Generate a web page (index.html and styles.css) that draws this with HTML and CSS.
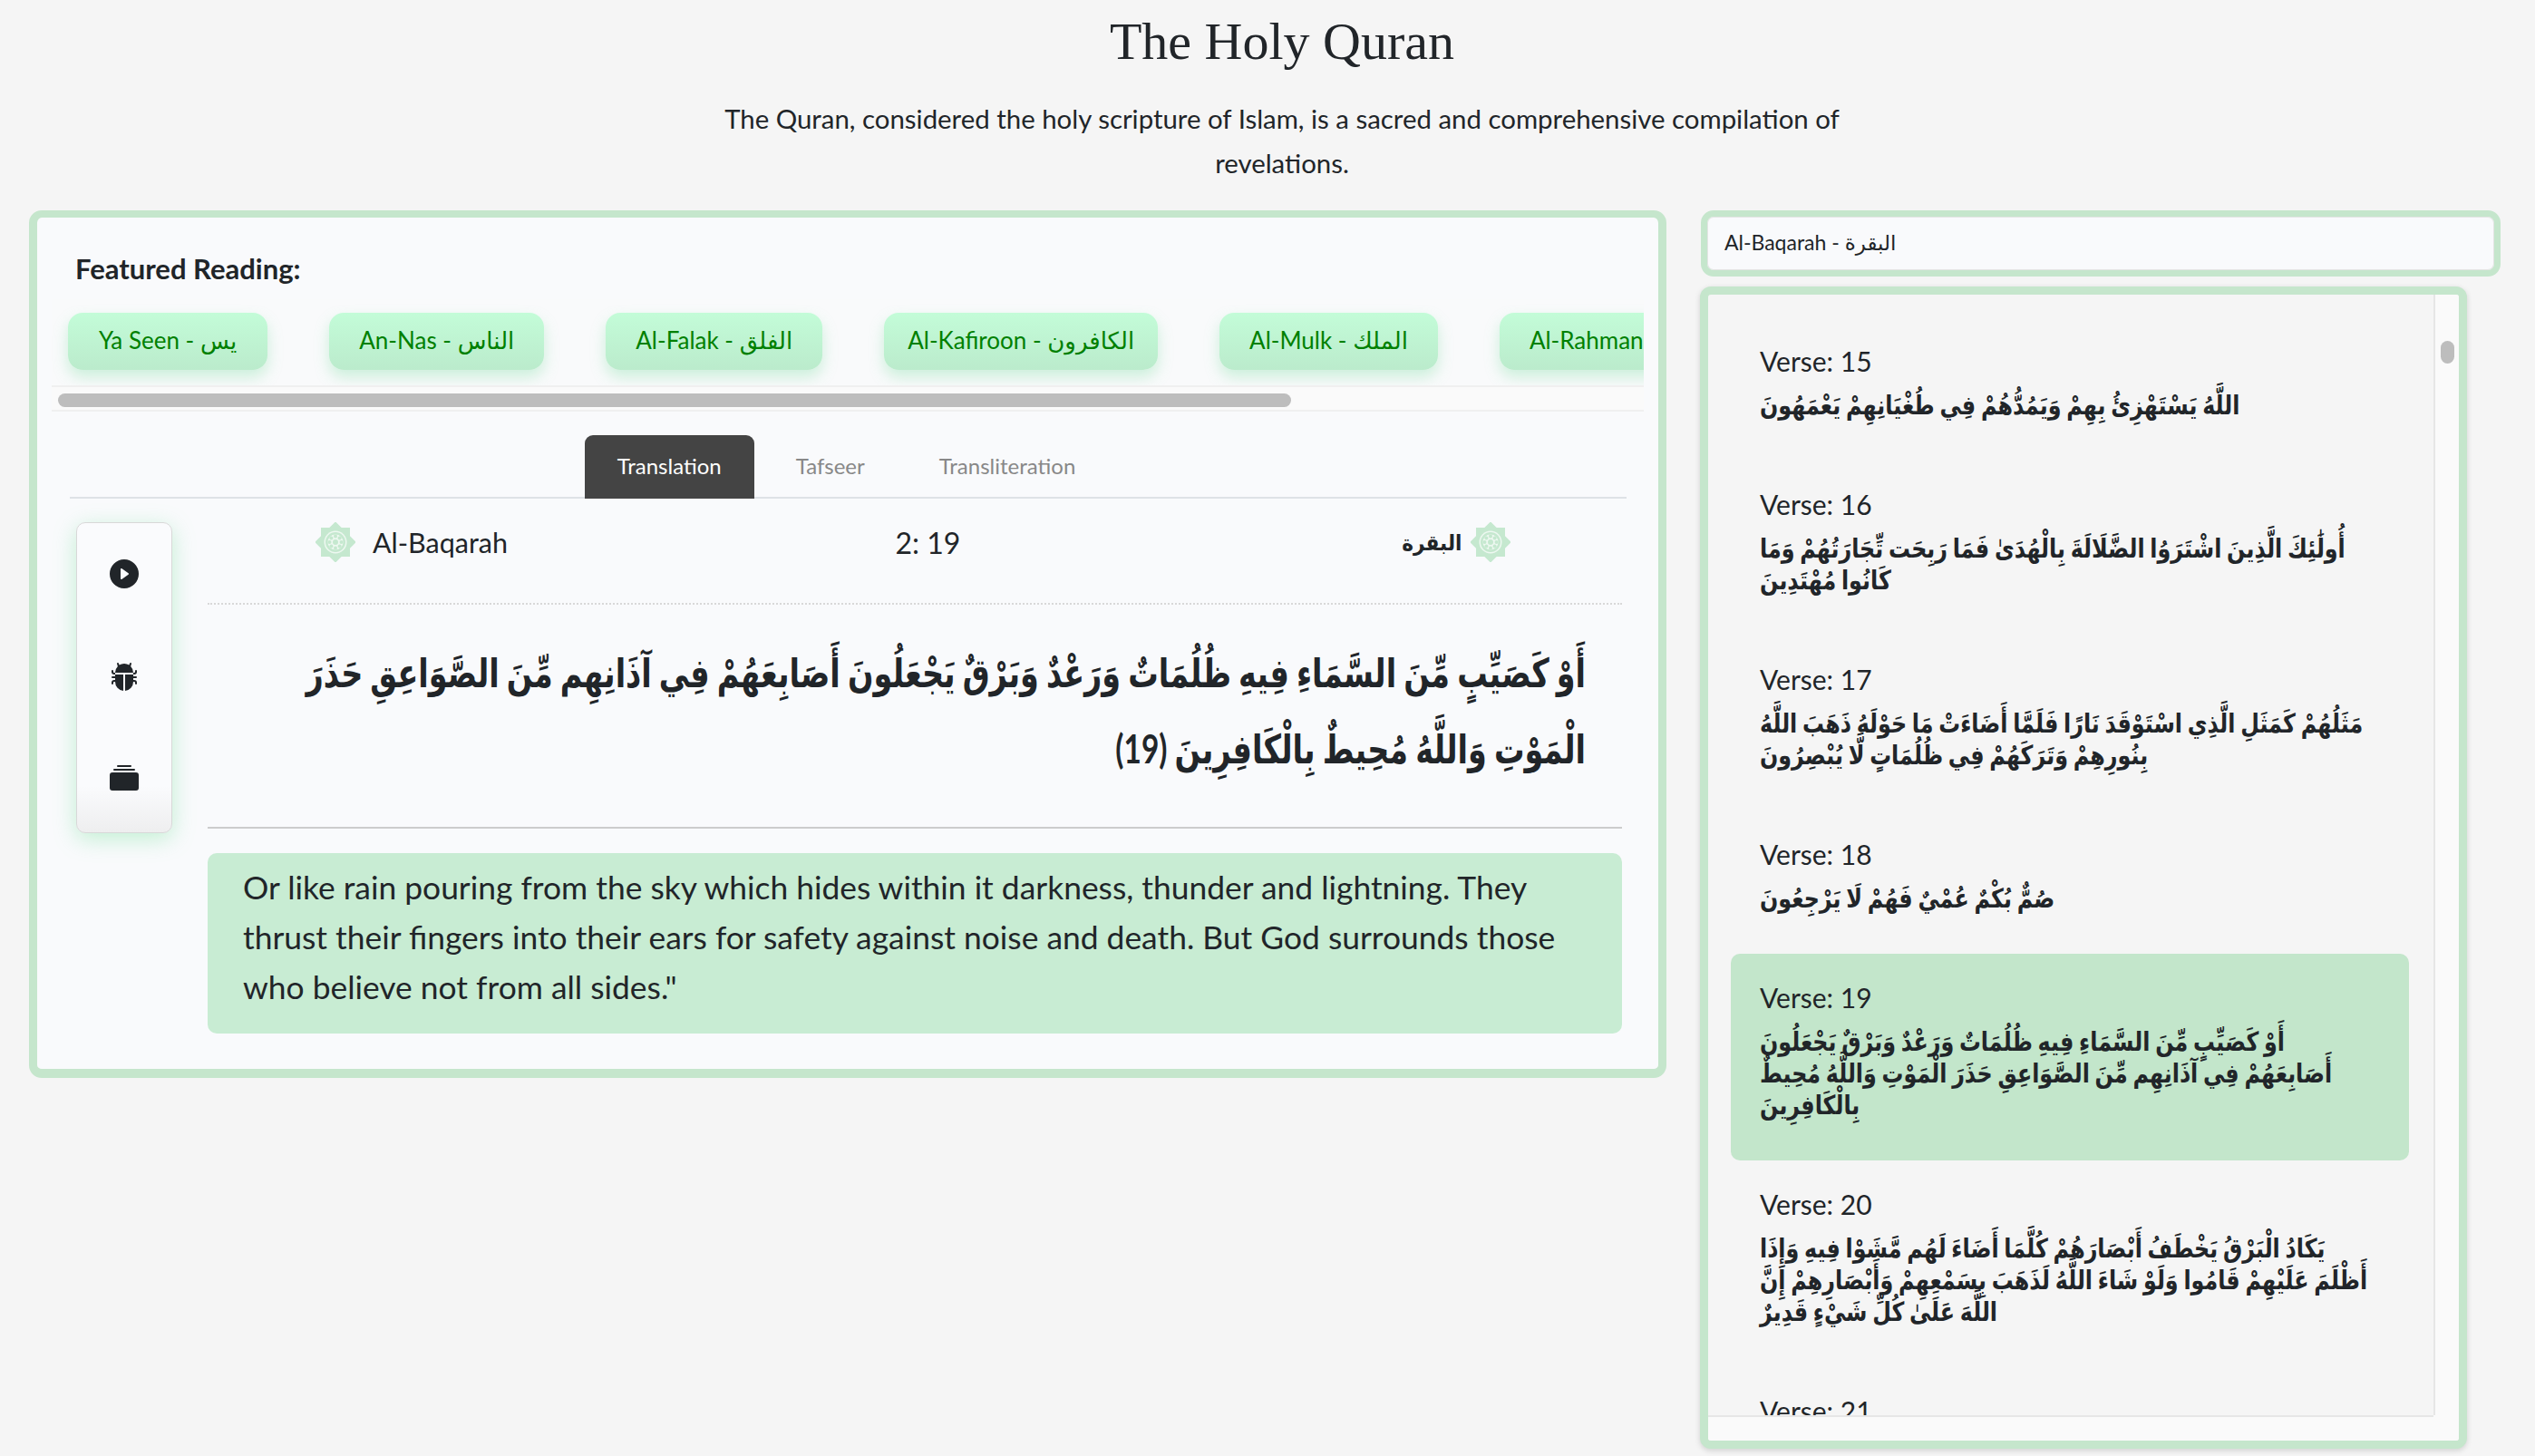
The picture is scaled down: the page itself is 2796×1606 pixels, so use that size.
FILE: index.html

```html
<!DOCTYPE html>
<html lang="en">
<head>
<meta charset="utf-8">
<title>The Holy Quran</title>
<link rel="stylesheet" href="styles.css">
</head>
<body>
<header class="top">
	<h1>The Holy Quran</h1>
	<p>The Quran, considered the holy scripture of Islam, is a sacred and comprehensive compilation of revelations.</p>
</header>

<main class="page">
	<section class="reader">
		<h2>Featured Reading:</h2>
		<div class="chips">
			<a class="chip">Ya Seen - يس</a>
			<a class="chip">An-Nas - الناس</a>
			<a class="chip">Al-Falak - الفلق</a>
			<a class="chip">Al-Kafiroon - الكافرون</a>
			<a class="chip">Al-Mulk - الملك</a>
			<a class="chip">Al-Rahman - الرحمن</a>
		</div>
		<div class="hscroll"><span></span></div>

		<ul class="tabs">
			<li class="ac">Translation</li>
			<li>Tafseer</li>
			<li>Transliteration</li>
		</ul>

		<div class="verse-view">
			<div class="tools">
				<svg viewBox="0 0 16 16"><path d="M16 8A8 8 0 1 1 0 8a8 8 0 0 1 16 0zM6.79 5.093A.5.5 0 0 0 6 5.5v5a.5.5 0 0 0 .79.407l3.5-2.5a.5.5 0 0 0 0-.814l-3.5-2.5z"/></svg>
				<svg viewBox="0 0 16 16"><path d="M4.978.855a.5.5 0 1 0-.956.29l.41 1.352A4.985 4.985 0 0 0 3 6h10a4.985 4.985 0 0 0-1.432-3.503l.41-1.352a.5.5 0 1 0-.956-.29l-.291.956A4.978 4.978 0 0 0 8 1a4.979 4.979 0 0 0-2.731.811l-.29-.956z"/><path d="M13 6v1H8.5v8.975A5 5 0 0 0 13 11h.5a.5.5 0 0 1 .5.5v.5a.5.5 0 1 0 1 0v-.5a1.5 1.5 0 0 0-1.5-1.5H13V9h1.5a.5.5 0 0 0 0-1H13V7h.5A1.5 1.5 0 0 0 15 5.5V5a.5.5 0 0 0-1 0v.5a.5.5 0 0 1-.5.5H13zm-5.5 9.975V7H3V6h-.5a.5.5 0 0 1-.5-.5V5a.5.5 0 0 0-1 0v.5A1.5 1.5 0 0 0 2.5 7H3v1H1.5a.5.5 0 0 0 0 1H3v1h-.5A1.5 1.5 0 0 0 1 11.5v.5a.5.5 0 1 0 1 0v-.5a.5.5 0 0 1 .5-.5H3a5 5 0 0 0 4.5 4.975z"/></svg>
				<svg viewBox="0 0 16 16"><path d="M0 13a1.5 1.5 0 0 0 1.5 1.5h13A1.5 1.5 0 0 0 16 13V6a1.5 1.5 0 0 0-1.5-1.5h-13A1.5 1.5 0 0 0 0 6v7zM2 3a.5.5 0 0 0 .5.5h11a.5.5 0 0 0 0-1h-11A.5.5 0 0 0 2 3zm2-2a.5.5 0 0 0 .5.5h7a.5.5 0 0 0 0-1h-7A.5.5 0 0 0 4 1z"/></svg>
			</div>

			<div class="verse-main">
				<div class="verse-head">
					<div class="sura">
						<svg class="star" viewBox="0 0 44 44"><use href="#star"/></svg>
						<span>Al-Baqarah</span>
					</div>
					<div class="verse-no">2: 19</div>
					<div class="sura sura-ar">
						<span>البقرة</span>
						<svg class="star" viewBox="0 0 44 44"><use href="#star"/></svg>
					</div>
				</div>
				<div class="arabic" dir="rtl"><p>أَوْ كَصَيِّبٍ مِّنَ السَّمَاءِ فِيهِ ظُلُمَاتٌ وَرَعْدٌ وَبَرْقٌ يَجْعَلُونَ أَصَابِعَهُمْ فِي آذَانِهِم مِّنَ الصَّوَاعِقِ حَذَرَ الْمَوْتِ وَاللَّهُ مُحِيطٌ بِالْكَافِرِينَ (19)</p></div>
				<p class="translation">Or like rain pouring from the sky which hides within it darkness, thunder and lightning. They thrust their fingers into their ears for safety against noise and death. But God surrounds those who believe not from all sides."</p>
			</div>
		</div>
	</section>

	<aside class="side">
		<div class="picker">Al-Baqarah - البقرة</div>
		<div class="list-box">
			<div class="list">
				<div class="item"><div>Verse: 15</div><p>اللَّهُ يَسْتَهْزِئُ بِهِمْ وَيَمُدُّهُمْ فِي طُغْيَانِهِمْ يَعْمَهُونَ</p></div>
				<div class="item"><div>Verse: 16</div><p>أُولَٰئِكَ الَّذِينَ اشْتَرَوُا الضَّلَالَةَ بِالْهُدَىٰ فَمَا رَبِحَت تِّجَارَتُهُمْ وَمَا كَانُوا مُهْتَدِينَ</p></div>
				<div class="item"><div>Verse: 17</div><p>مَثَلُهُمْ كَمَثَلِ الَّذِي اسْتَوْقَدَ نَارًا فَلَمَّا أَضَاءَتْ مَا حَوْلَهُ ذَهَبَ اللَّهُ بِنُورِهِمْ وَتَرَكَهُمْ فِي ظُلُمَاتٍ لَّا يُبْصِرُونَ</p></div>
				<div class="item"><div>Verse: 18</div><p>صُمٌّ بُكْمٌ عُمْيٌ فَهُمْ لَا يَرْجِعُونَ</p></div>
				<div class="item ac"><div>Verse: 19</div><p>أَوْ كَصَيِّبٍ مِّنَ السَّمَاءِ فِيهِ ظُلُمَاتٌ وَرَعْدٌ وَبَرْقٌ يَجْعَلُونَ أَصَابِعَهُمْ فِي آذَانِهِم مِّنَ الصَّوَاعِقِ حَذَرَ الْمَوْتِ وَاللَّهُ مُحِيطٌ بِالْكَافِرِينَ</p></div>
				<div class="item"><div>Verse: 20</div><p>يَكَادُ الْبَرْقُ يَخْطَفُ أَبْصَارَهُمْ كُلَّمَا أَضَاءَ لَهُم مَّشَوْا فِيهِ وَإِذَا أَظْلَمَ عَلَيْهِمْ قَامُوا وَلَوْ شَاءَ اللَّهُ لَذَهَبَ بِسَمْعِهِمْ وَأَبْصَارِهِمْ إِنَّ اللَّهَ عَلَىٰ كُلِّ شَيْءٍ قَدِيرٌ</p></div>
				<div class="item"><div>Verse: 21</div></div>
			</div>
			<div class="vbar"><span></span></div>
			<div class="hbar"></div>
			<div class="corner"></div>
		</div>
	</aside>
</main>

<!-- eight point star used beside the sura names -->
<svg class="defs" width="0" height="0">
	<symbol id="star" viewBox="0 0 44 44">
		<g fill="#c5e8cf">
			<rect x="6" y="6" width="32" height="32"/>
			<rect x="6" y="6" width="32" height="32" transform="rotate(45 22 22)"/>
		</g>
		<circle cx="22" cy="22" r="12.5" fill="#eef8f1"/>
		<circle cx="22" cy="22" r="11" fill="#c5e8cf"/>
		<circle cx="22" cy="22" r="8.5" fill="#eef8f1"/>
		<g fill="#c5e8cf">
			<circle cx="22" cy="15.5" r="2"/><circle cx="22" cy="28.5" r="2"/>
			<circle cx="15.5" cy="22" r="2"/><circle cx="28.5" cy="22" r="2"/>
			<circle cx="17.4" cy="17.4" r="2"/><circle cx="26.6" cy="17.4" r="2"/>
			<circle cx="17.4" cy="26.6" r="2"/><circle cx="26.6" cy="26.6" r="2"/>
			<circle cx="22" cy="22" r="3"/>
		</g>
	</symbol>
</svg>
</body>
</html>
```

FILE: styles.css

```css
* {margin:0; padding:0; box-sizing:border-box;}
li {list-style:none;}

html, body {height:1606px; overflow:hidden;}
body {background:#f5f5f5; color:#212529; font-family:"Lato","DejaVu Sans",sans-serif;}

.defs {position:absolute;}

/* heading */
.top {text-align:center; height:232px; padding-left:32px;}
.top h1 {font-family:"Liberation Serif",serif; font-weight:400; font-size:58px; line-height:64px; padding-top:14px;}
.top p {width:1300px; margin:28px auto 0; font-size:29.4px; line-height:49px;}

.page {display:flex; align-items:flex-start; gap:38px; padding:0 39px 0 32px;}

/* left panel */
.reader {width:1806px; height:957px; flex:none; background:#f9fafc; border:solid #c5e6cc; border-width:8px 9px 10px; border-radius:14px; padding:0 16px;}
.reader h2 {font-size:31px; font-weight:700; line-height:50px; padding:31px 0 0 26px; height:90px; color:#212529;}

.chips {display:flex; gap:68px; overflow:hidden; padding:15px 19px 17px 18px; background:#f9fafb;}
.chip {flex:none; height:63px; line-height:61px; padding:0 33px; font-size:26px; color:#008000; white-space:nowrap; border-radius:16px; background:linear-gradient(#c3fcd8,#bbebcc); box-shadow:0 8px 16px rgba(120,220,160,.35);}
.chip:first-child {padding:0 34px;}
.chip:nth-child(4) {padding:0 26px;}

.hscroll {height:29px; padding:7px 0 0 7px; background:#fafafa; border-top:2px solid #f0f0f0; border-bottom:2px solid #f0f0f0;}
.hscroll span {display:block; width:1360px; height:15px; background:#bdbdbd; border-radius:8px;}

.tabs {display:flex; justify-content:center; margin:26px 19px 0 20px; padding-left:6px; border-bottom:2px solid #dee2e6; height:70px;}
.tabs li {height:70px; line-height:68px; padding:0 36px; margin-right:10px; font-size:24px; color:#888; border-radius:9px 9px 0 0;}
.tabs li.ac {background:#444; color:#fff;}

.verse-view {display:flex; gap:39px; padding:26px 24px 0 27px;}

.tools {width:106px; height:343px; flex:none; display:flex; flex-direction:column; align-items:center; gap:81px; padding-top:40px; border:1px solid #d8d8d8; border-radius:10px; background:linear-gradient(#fafbfd 85%,#eeeeef); box-shadow:0 6px 24px rgba(110,225,150,.4);}
.tools svg {width:32px; height:32px; fill:#212529; flex:none;}

.verse-main {flex:1; min-width:0;}
.verse-head {display:flex; justify-content:space-between; height:91px; padding:0 123px 0 119px; border-bottom:2px dotted #d8d8d8;}
.sura {display:flex; align-items:flex-start; gap:19px; font-size:30.5px; line-height:44px;}
.sura-ar {gap:10px; font-weight:700; font-size:24px;}
.sura-ar span {transform:scaleX(.9); transform-origin:right center;}
.star {width:44px; height:44px; flex:none;}
.verse-no {font-size:32px; line-height:46px; margin-right:52px;}

/* DejaVu is much wider than the reference's naskh, so the lines are drawn narrower */
.arabic {height:247px; padding:32px 40px 0 0; border-bottom:2px solid #ccc; overflow:hidden;}
.arabic p {width:1950px; font-size:44px; font-weight:700; line-height:84px; transform:scaleX(.76); transform-origin:right top;}
.translation {margin-top:27px; height:199px; padding:10px 39px; background:#c8ecd3; border-radius:10px; font-size:35.4px; line-height:55px;}

/* right column */
.side {width:882px; flex:none;}
.picker {height:73px; line-height:56px; padding:0 19px; border:7px solid #c5e6cc; border-radius:14px; background:#f9fafc; font-size:23px; box-shadow:inset 0 0 0 1px #e4e4e4;}

.list-box {width:846px; height:1282px; margin-top:11px; margin-left:-1px; display:grid; grid-template-columns:1fr 28px; grid-template-rows:1fr 28px; border:9px solid #c5e6cc; border-radius:12px; background:#f5f5f5; box-shadow:0 2px 6px rgba(0,0,0,.15); overflow:hidden;}
.list {overflow:hidden; padding:25px 27px 0 25px; min-width:0; min-height:0;}
.item {padding:29px 32px 45px; border-radius:10px; overflow:hidden;}
.item > div {font-size:30px; line-height:38px;}
.item p {width:822px; margin-top:11px; font-size:29px; font-weight:700; line-height:35px; transform:scaleX(.82); transform-origin:left top;}
.item.ac {background:#c3e6cb;}

.vbar {background:#fafafa; border-left:2px solid #e6e6e6; padding:51px 5px 0 6px;}
.vbar span {display:block; height:25px; background:#bdbdbd; border-radius:8px;}
.hbar {background:#fafafa; border-top:2px solid #e6e6e6;}
.corner {background:#fafafa;}
```
